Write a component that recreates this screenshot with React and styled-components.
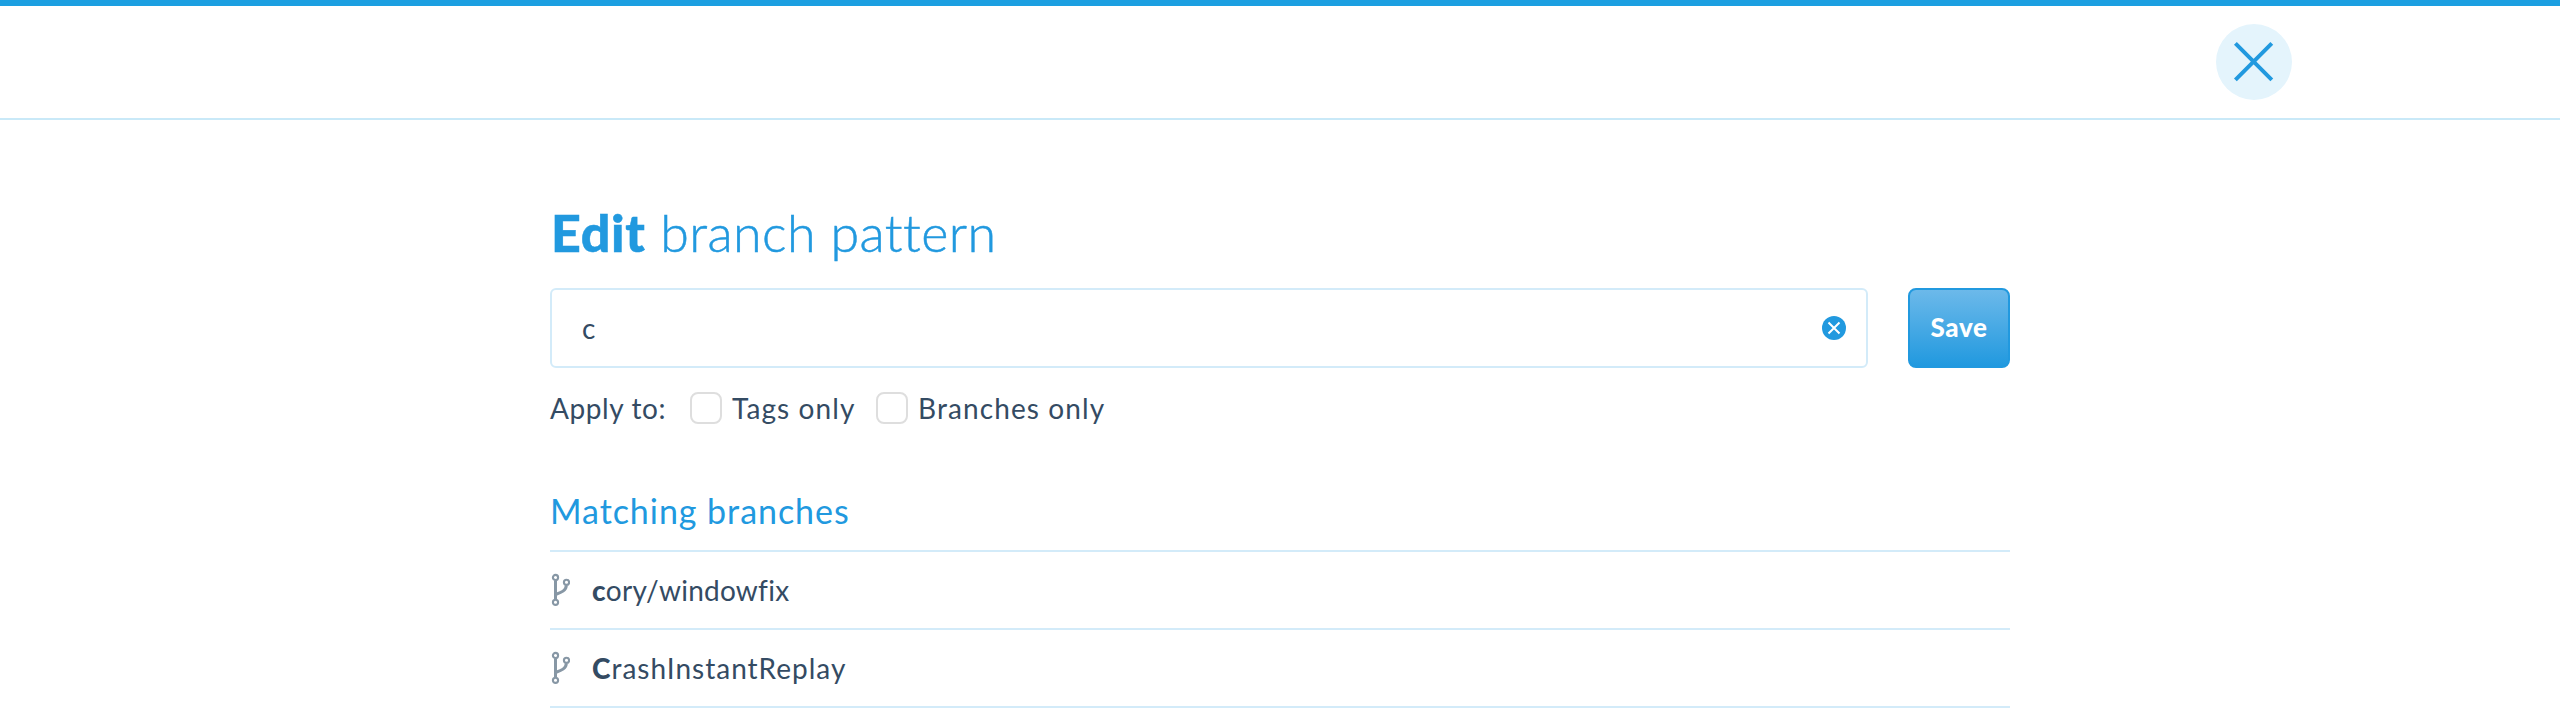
import React from "react";
import styled, { createGlobalStyle } from "styled-components";

const blue = "#2199df";
const pale = "#d3ebf9";
const ink = "#344b63";

const GlobalStyle = createGlobalStyle`
  * { box-sizing: border-box; }
  body {
    margin: 0;
    background: #fff;
    color: ${ink};
    font-family: Lato, "Liberation Sans", sans-serif;
    font-size: 28px;
    overflow: hidden;
  }
`;

const Page = styled.div`
  height: 708px;
  overflow: hidden;
`;

const Header = styled.header`
  display: flex;
  justify-content: flex-end;
  height: 120px;
  padding: 18px 268px 0 0;
  border-top: 6px solid #1c9fe1;
  border-bottom: 2px solid #c9e9f8;
`;

const CloseButton = styled.button`
  width: 76px;
  height: 76px;
  padding: 0;
  border: 0;
  border-radius: 50%;
  background: #e4f4fc;
  svg { display: block; }
`;

const Main = styled.main`
  width: 1460px;
  margin: 0 auto;
`;

const Title = styled.h1`
  margin: 80px 0 0;
  height: 88px;
  padding-left: 1px;
  color: ${blue};
  font-size: 52px;
  font-weight: 300;
  line-height: 64px;
  white-space: nowrap;
  letter-spacing: 0.4px;
  -webkit-text-stroke: 0.5px ${blue};
  strong { font-weight: 900; letter-spacing: 0.7px; }
`;

const PatternRow = styled.form`
  display: flex;
  gap: 40px;
  height: 80px;
`;

const Field = styled.div`
  display: flex;
  align-items: center;
  width: 1318px;
  padding: 0 20px 0 30px;
  border: 2px solid ${pale};
  border-radius: 6px;
`;

const Input = styled.input`
  flex: 1;
  min-width: 0;
  padding: 0;
  border: 0;
  outline: 0;
  background: none;
  color: ${ink};
  font: inherit;
`;

const ClearButton = styled.button`
  width: 24px;
  height: 24px;
  padding: 0;
  border: 0;
  border-radius: 50%;
  background: ${blue};
  svg { display: block; }
`;

const SaveButton = styled.button`
  width: 102px;
  height: 80px;
  padding: 0 0 2px;
  border: 2px solid ${blue};
  border-radius: 8px;
  background: linear-gradient(#6cb9ea, ${blue});
  color: #fff;
  font: 900 26px Lato, sans-serif;
  letter-spacing: 0.6px;
`;

const Options = styled.div`
  display: flex;
  align-items: center;
  height: 80px;
  white-space: nowrap;
`;

const OptionsLabel = styled.span`
  width: 140px;
  letter-spacing: 0.6px;
`;

const Option = styled.label`
  display: flex;
  align-items: center;
  gap: 10px;
  width: ${(p) => p.$width}px;
  letter-spacing: 1.1px;
`;

const Checkbox = styled.input`
  appearance: none;
  flex: none;
  width: 32px;
  height: 32px;
  margin: 0;
  border: 2px solid #dedede;
  border-radius: 8px;
  background: #fff;
`;

const SectionTitle = styled.h2`
  height: 104px;
  margin: 0;
  padding-top: 40px;
  border-bottom: 2px solid ${pale};
  color: ${blue};
  font-size: 34px;
  font-weight: 400;
  line-height: 46px;
  letter-spacing: 0.95px;
`;

const BranchList = styled.ul`
  margin: 0;
  padding: 0;
  list-style: none;
`;

const BranchItem = styled.li`
  display: flex;
  align-items: center;
  height: 78px;
  gap: 22px;
  border-bottom: 2px solid ${pale};
  letter-spacing: ${(p) => p.$spacing}px;
  svg { flex: none; }
  strong { font-weight: 900; }
`;

const BranchIcon = () => (
  <svg width="20" height="34" viewBox="0 0 20 34" fill="none" stroke="#8797a5">
    <circle cx="5.5" cy="4.5" r="2.6" strokeWidth="2.1" />
    <circle cx="16.5" cy="9.3" r="2.6" strokeWidth="2.1" />
    <circle cx="5.5" cy="29.3" r="2.6" strokeWidth="2.1" />
    <path d="M5.5 7.5v19M5.5 21.5C11 19.5 15.8 18 16.4 12.3" strokeWidth="3" />
  </svg>
);

const branches = [
  { match: "c", rest: "ory/windowfix", spacing: 0.25 },
  { match: "C", rest: "rashInstantReplay", spacing: 1 },
];

export default function App() {
  return (
    <Page>
      <GlobalStyle />
      <Header>
        <CloseButton aria-label="Close">
          <svg width="76" height="76" viewBox="0 0 76 76" stroke={blue} strokeWidth="4">
            <path d="M19.4 19.4L55.8 55.8M55.8 19.4L19.4 55.8" />
          </svg>
        </CloseButton>
      </Header>
      <Main>
        <Title><strong>Edit</strong> branch pattern</Title>
        <PatternRow onSubmit={(e) => e.preventDefault()}>
          <Field>
            <Input defaultValue="c" aria-label="Branch pattern" />
            <ClearButton type="button" aria-label="Clear">
              <svg width="24" height="24" viewBox="0 0 24 24" stroke="#fff" strokeWidth="2">
                <path d="M6.5 6.5L17.5 17.5M17.5 6.5L6.5 17.5" />
              </svg>
            </ClearButton>
          </Field>
          <SaveButton>Save</SaveButton>
        </PatternRow>
        <Options>
          <OptionsLabel>Apply to:</OptionsLabel>
          <Option $width={186}><Checkbox type="checkbox" />Tags only</Option>
          <Option $width={240}><Checkbox type="checkbox" />Branches only</Option>
        </Options>
        <SectionTitle>Matching branches</SectionTitle>
        <BranchList>
          {branches.map((b) => (
            <BranchItem key={b.rest} $spacing={b.spacing}>
              <BranchIcon />
              <span><strong>{b.match}</strong>{b.rest}</span>
            </BranchItem>
          ))}
        </BranchList>
      </Main>
    </Page>
  );
}
